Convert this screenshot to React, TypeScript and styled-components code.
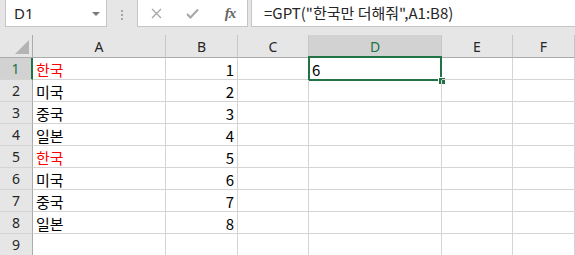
import React from 'react'
import styled, { createGlobalStyle, css } from 'styled-components'

const GlobalStyle = createGlobalStyle`
    html, body {
        margin: 0;
        padding: 0;
        background: #ffffff;
    }
    body {
        width: 575px;
        height: 255px;
        overflow: hidden;
    }
`

const UI_FONT = `"Noto Sans", "Noto Sans CJK KR", sans-serif`
const CELL_FONT = `"Noto Sans CJK KR", "Noto Sans", sans-serif`
const GREEN = '#217346'

const Sheet = styled.div`
    width: 575px;
    height: 255px;
    overflow: hidden;
    background: #ffffff;
`

const FormulaBar = styled.div`
    display: flex;
    align-items: flex-start;
    height: 35px;
    background: #e6e6e6;
    box-sizing: border-box;
`

const NameBox = styled.div`
    display: flex;
    align-items: center;
    justify-content: space-between;
    box-sizing: border-box;
    width: 102px;
    height: 27px;
    margin-left: 5px;
    padding: 0 6px 0 8px;
    background: #ffffff;
    border: 1px solid #c6c6c6;
    border-top: none;
    font-family: ${UI_FONT};
    font-size: 15px;
    color: #262626;
`

const DropArrow = styled.span`
    width: 0;
    height: 0;
    margin-top: 1px;
    border-left: 4px solid transparent;
    border-right: 4px solid transparent;
    border-top: 4px solid #7a7a7a;
`

const Grip = styled.div`
    display: flex;
    flex-direction: column;
    gap: 2px;
    width: 30px;
    align-items: center;
    padding-top: 10px;

    span {
        width: 2px;
        height: 2px;
        background: #a6a6a6;
    }
`

const ButtonBox = styled.div`
    display: flex;
    align-items: center;
    box-sizing: border-box;
    width: 111px;
    height: 27px;
    background: #ffffff;
    border: 1px solid #c6c6c6;
    border-top: none;
`

const BarButton = styled.div`
    display: flex;
    align-items: center;
    justify-content: center;
    width: 36px;
    height: 100%;
`

const Fx = styled.span`
    font-family: "Liberation Serif", serif;
    font-style: italic;
    font-weight: bold;
    font-size: 15px;
    color: #666666;
    letter-spacing: -1px;
    margin-left: 4px;
`

const FormulaInput = styled.div`
    flex: 1;
    box-sizing: border-box;
    height: 27px;
    margin-left: 3px;
    padding: 2px 0 0 12px;
    background: #ffffff;
    border-left: 1px solid #c6c6c6;
    border-bottom: 1px solid #c6c6c6;
    font-family: ${CELL_FONT};
    font-size: 15px;
    color: #262626;
    white-space: nowrap;
`

const Grid = styled.div`
    display: grid;
    grid-template-columns: 33px 133px 72px 71px 133px 71px 62px;
    grid-template-rows: 23px repeat(9, 22px);
`

const HeaderCell = styled.div<{ $selected?: boolean }>`
    display: flex;
    align-items: center;
    justify-content: center;
    box-sizing: border-box;
    background: #e6e6e6;
    border-right: 1px solid #c6c6c6;
    border-bottom: 1px solid #ababab;
    font-family: ${UI_FONT};
    font-size: 14px;
    color: #262626;

    ${p => p.$selected && css`
        background: #d2d2d2;
        color: ${GREEN};
        border-bottom: 2px solid ${GREEN};
        padding-top: 1px;
    `}
`

const Corner = styled.div`
    position: relative;
    background: #e6e6e6;
    border-right: 1px solid #ababab;
    border-bottom: 1px solid #ababab;
    box-sizing: border-box;

    &::after {
        content: '';
        position: absolute;
        right: 3px;
        bottom: 3px;
        width: 0;
        height: 0;
        border-left: 14px solid transparent;
        border-bottom: 14px solid #b4b4b4;
    }
`

const RowHeader = styled.div<{ $selected?: boolean }>`
    display: flex;
    align-items: center;
    justify-content: center;
    box-sizing: border-box;
    background: #e6e6e6;
    border-right: 1px solid #ababab;
    border-bottom: 1px solid #d4d4d4;
    font-family: ${UI_FONT};
    font-size: 14px;
    color: #262626;

    ${p => p.$selected && css`
        background: #d2d2d2;
        color: ${GREEN};
        border-right: 2px solid ${GREEN};
    `}
`

const Cell = styled.div<{ $align?: 'left' | 'right'; $red?: boolean }>`
    position: relative;
    display: flex;
    align-items: center;
    justify-content: ${p => (p.$align === 'right' ? 'flex-end' : 'flex-start')};
    box-sizing: border-box;
    padding: 1px 3px 0 3px;
    border-right: 1px solid #d4d4d4;
    border-bottom: 1px solid #d4d4d4;
    font-family: ${CELL_FONT};
    font-size: 15px;
    color: ${p => (p.$red ? '#ff0000' : '#000000')};
    white-space: nowrap;
`

const Selection = styled.div`
    position: absolute;
    left: -1px;
    top: -2px;
    right: -1px;
    bottom: -2px;
    border: 2px solid ${GREEN};
    pointer-events: none;

    &::after {
        content: '';
        position: absolute;
        right: -5px;
        bottom: -5px;
        width: 6px;
        height: 6px;
        background: ${GREEN};
        border-left: 1px solid #ffffff;
        border-top: 1px solid #ffffff;
    }
`

const columns = ['A', 'B', 'C', 'D', 'E', 'F']

const rows: { name?: string; value?: number; red?: boolean }[] = [
    { name: '한국', value: 1, red: true },
    { name: '미국', value: 2 },
    { name: '중국', value: 3 },
    { name: '일본', value: 4 },
    { name: '한국', value: 5, red: true },
    { name: '미국', value: 6 },
    { name: '중국', value: 7 },
    { name: '일본', value: 8 },
    {},
]

export default function App() {
    return (
        <Sheet>
            <GlobalStyle />
            <FormulaBar>
                <NameBox>
                    D1
                    <DropArrow />
                </NameBox>
                <Grip>
                    <span />
                    <span />
                    <span />
                </Grip>
                <ButtonBox>
                    <BarButton>
                        <svg width="11" height="11" viewBox="0 0 11 11">
                            <path d="M1 1L10 10M10 1L1 10" stroke="#a6a6a6" strokeWidth="1.3" fill="none" />
                        </svg>
                    </BarButton>
                    <BarButton>
                        <svg width="13" height="11" viewBox="0 0 13 11">
                            <path d="M1 6L4.5 9.5L12 1.5" stroke="#a6a6a6" strokeWidth="2" fill="none" />
                        </svg>
                    </BarButton>
                    <BarButton>
                        <Fx>fx</Fx>
                    </BarButton>
                </ButtonBox>
                <FormulaInput>=GPT("한국만 더해줘",A1:B8)</FormulaInput>
            </FormulaBar>

            <Grid>
                <Corner />
                {columns.map(c => (
                    <HeaderCell key={c} $selected={c === 'D'}>{c}</HeaderCell>
                ))}

                {rows.map((r, i) => (
                    <React.Fragment key={i}>
                        <RowHeader $selected={i === 0}>{i + 1}</RowHeader>
                        <Cell $red={r.red}>{r.name}</Cell>
                        <Cell $align="right">{r.value}</Cell>
                        <Cell />
                        <Cell>
                            {i === 0 && '6'}
                            {i === 0 && <Selection />}
                        </Cell>
                        <Cell />
                        <Cell />
                    </React.Fragment>
                ))}
            </Grid>
        </Sheet>
    )
}
